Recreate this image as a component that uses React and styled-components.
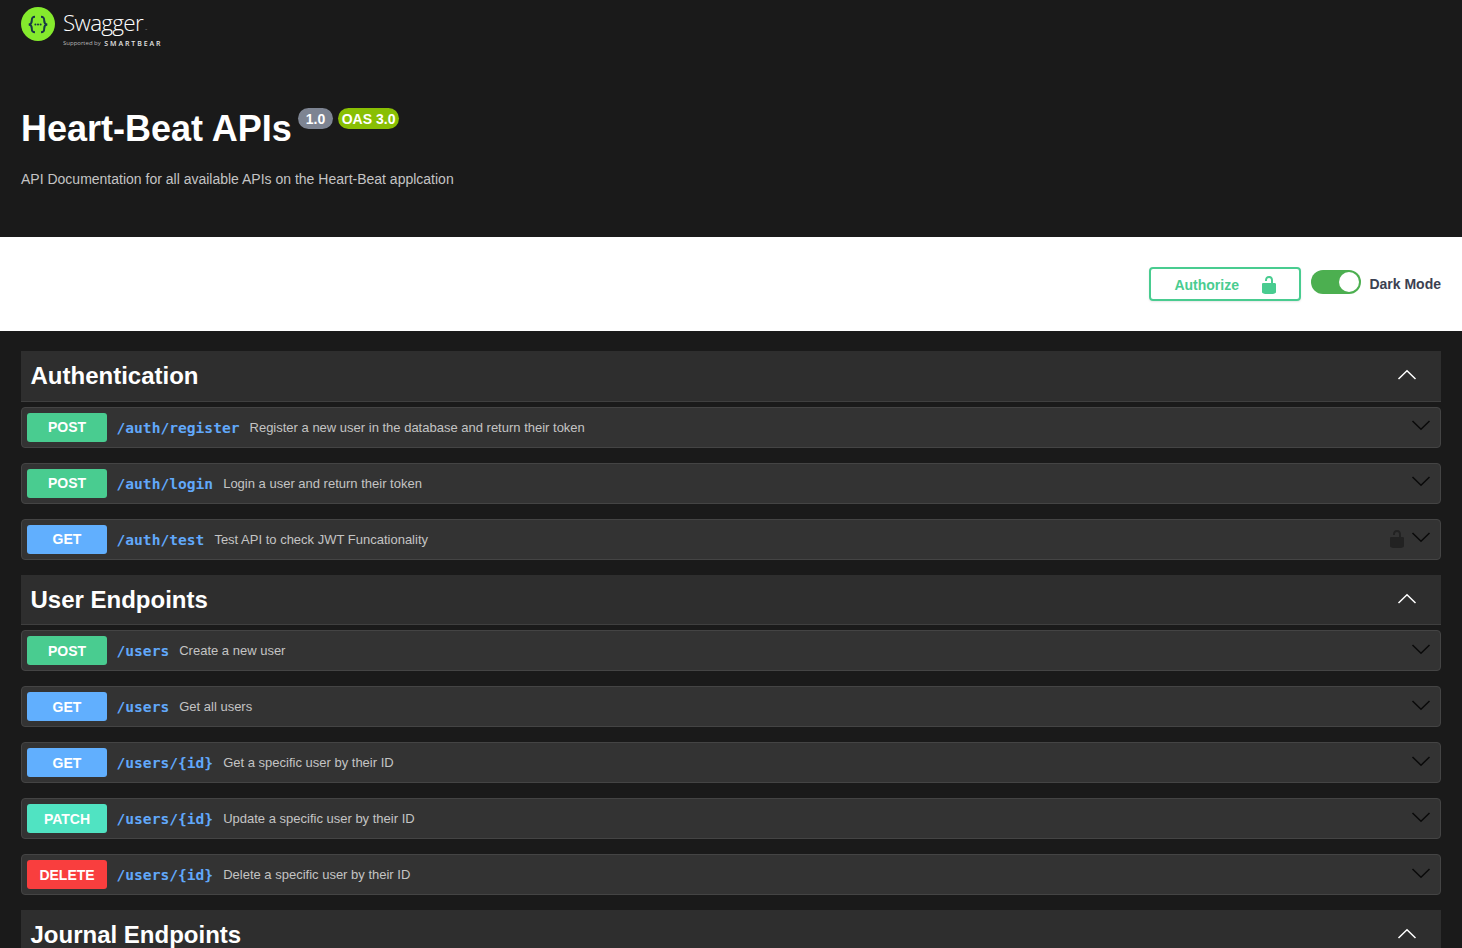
import styled, { createGlobalStyle } from 'styled-components'

const Global = createGlobalStyle`
html, body {
  margin: 0;
  padding: 0;
  height: 948px;
  overflow: hidden;
  background-color: #1a1a1a;
  font-family: "Liberation Sans", Arial, sans-serif;
}
#root {
  height: 948px;
  overflow: hidden;
}
`

const Header = styled.header`
height: 237px;
box-sizing: border-box;
padding: 7px 21px 0;
background-color: #1a1a1a;
`

const Logo = styled.div`
display: flex;
align-items: flex-start;
gap: 8px;
height: 40px;
`

const LogoText = styled.div`
display: flex;
flex-direction: column;
`

const LogoName = styled.span`
font-family: "Open Sans", sans-serif;
font-weight: 300;
font-size: 22.5px;
line-height: 32px;
letter-spacing: -0.7px;
color: #ffffff;
`

const LogoTm = styled.span`
margin-left: 2px;
font-size: 3px;
line-height: 3px;
letter-spacing: 0;
color: #cccccc;
`

const LogoSub = styled.div`
display: flex;
align-items: center;
gap: 3.5px;
height: 8px;
white-space: nowrap;
`

const Supported = styled.span`
font-family: "Open Sans", sans-serif;
font-size: 6px;
color: #b8b8b8;
`

const Smartbear = styled.span`
font-family: "Open Sans", sans-serif;
font-size: 7px;
font-weight: 600;
letter-spacing: 1.9px;
color: #e4e4e4;
`

const TitleRow = styled.div`
display: flex;
align-items: flex-start;
margin-top: 61px;
`

const Title = styled.h1`
margin: 0;
font-size: 36px;
font-weight: 700;
line-height: 42px;
color: #ffffff;
`

const Stamp = styled.span`
margin: 0 0 0 ${p => p.$gap}px;
padding: 1px ${p => p.$pad}px 0;
height: 21px;
box-sizing: border-box;
border-radius: 11px;
background-color: ${p => p.$bg};
font-size: 14px;
font-weight: 700;
line-height: 20px;
color: #ffffff;
`

const Description = styled.p`
margin: 19px 0 0;
font-size: 14px;
line-height: 20px;
color: #c4c4c4;
`

const Bar = styled.div`
height: 94px;
box-sizing: border-box;
padding: 30px 21px 0;
display: flex;
justify-content: flex-end;
align-items: flex-start;
background-color: #ffffff;
`

const Authorize = styled.button`
width: 152px;
height: 34px;
box-sizing: border-box;
padding: 1px 20px 0 23px;
display: flex;
align-items: center;
justify-content: space-between;
background: transparent;
border: 2px solid #49cc90;
border-radius: 4px;
box-shadow: 0 1px 2px rgba(0, 0, 0, 0.1);
font-family: inherit;
font-size: 14px;
font-weight: 700;
color: #49cc90;
`

const Toggle = styled.div`
width: 50px;
height: 24px;
margin: 3px 0 0 10px;
padding: 2px;
box-sizing: border-box;
display: flex;
justify-content: flex-end;
border-radius: 12px;
background-color: #4caf50;
`

const Knob = styled.span`
width: 20px;
height: 20px;
border-radius: 50%;
background-color: #ffffff;
`

const ModeLabel = styled.span`
margin: 9px 0 0 8px;
font-size: 14px;
font-weight: 700;
line-height: 16px;
color: #3b4151;
`

const Main = styled.main`
padding: 20px 21px 0;
`

const SectionHead = styled.div`
height: 50.6px;
box-sizing: border-box;
padding: 1px 24px 0 9.5px;
display: flex;
align-items: center;
justify-content: space-between;
background-color: #2e2e2e;
border-bottom: 1px solid #3f3f3f;
`

const SectionTitle = styled.h3`
margin: 0;
font-size: 24px;
font-weight: 700;
line-height: 30px;
color: #ffffff;
`

const Rows = styled.div`
padding-top: 5px;
`

const Row = styled.div`
height: 41px;
margin-bottom: 15px;
box-sizing: border-box;
padding: 5px 9px 5px 5px;
display: flex;
align-items: center;
background-color: #333333;
border: 1px solid #444444;
border-radius: 4px;
`

const Method = styled.span`
flex: none;
width: 80px;
height: 29px;
display: flex;
align-items: center;
justify-content: center;
box-sizing: border-box;
padding-top: 0.4px;
border-radius: 3px;
background-color: ${p => p.$bg};
font-size: 14px;
font-weight: 700;
color: #ffffff;
`

const Path = styled.span`
padding: 0 10px 0 9.5px;
font-family: "DejaVu Sans Mono", monospace;
font-size: 14.6px;
font-weight: 700;
color: #61a8fa;
`

const Summary = styled.span`
flex: 1;
font-size: 13px;
color: #c4c4c4;
`

const Chevron = styled.svg`
flex: none;
width: 20px;
height: 20px;
fill: none;
stroke: ${p => p.$color};
stroke-width: 1.5px;
`

const Lock = styled.svg`
flex: none;
width: 20px;
height: 20px;
fill: ${p => p.$color};
margin-right: ${p => p.$right}px;
`

const LOCK_PATH = 'M15.8 8H14V5.6C14 2.703 12.665 1 10 1 7.334 1 6 2.703 6 5.6V6h2v-.801C8 3.754 8.797 3 10 3c1.203 0 2 .754 2 2.199V8H4c-.553 0-1 .646-1 1.199V17c0 .549.428 1.139.951 1.307l1.197.387C5.672 18.861 6.55 19 7.1 19h5.8c.549 0 1.428-.139 1.951-.307l1.196-.387c.524-.167.953-.757.953-1.306V9.199C17 8.646 16.352 8 15.8 8z'

const COLORS = { POST: '#49cc90', GET: '#61affe', PATCH: '#50e3c2', DELETE: '#f93e3e' }

const sections = [
  {
    name: 'Authentication',
    rows: [
      { method: 'POST', path: '/auth/register', text: 'Register a new user in the database and return their token' },
      { method: 'POST', path: '/auth/login', text: 'Login a user and return their token' },
      { method: 'GET', path: '/auth/test', text: 'Test API to check JWT Funcationality', locked: true },
    ],
  },
  {
    name: 'User Endpoints',
    rows: [
      { method: 'POST', path: '/users', text: 'Create a new user' },
      { method: 'GET', path: '/users', text: 'Get all users' },
      { method: 'GET', path: '/users/{id}', text: 'Get a specific user by their ID' },
      { method: 'PATCH', path: '/users/{id}', text: 'Update a specific user by their ID' },
      { method: 'DELETE', path: '/users/{id}', text: 'Delete a specific user by their ID' },
    ],
  },
  { name: 'Journal Endpoints', rows: [] },
]

function SwaggerMark() {
  return (
    <svg width="34" height="34" viewBox="0 0 34 34">
      <circle cx="17" cy="17" r="17" fill="#85ea2d" />
      <g fill="none" stroke="#173647" strokeWidth="2">
        <path d="M14 9.8C10.8 9.8 10.8 11.4 10.8 13.6C10.8 15.8 10.4 17.2 7.8 17.5C10.4 17.8 10.8 19.2 10.8 21.4C10.8 23.6 10.8 25.2 14 25.2" />
        <path d="M20 9.8C23.2 9.8 23.2 11.4 23.2 13.6C23.2 15.8 23.6 17.2 26.2 17.5C23.6 17.8 23.2 19.2 23.2 21.4C23.2 23.6 23.2 25.2 20 25.2" />
      </g>
      <g fill="#173647">
        <circle cx="14.4" cy="17.5" r="1" />
        <circle cx="17" cy="17.5" r="1" />
        <circle cx="19.6" cy="17.5" r="1" />
      </g>
    </svg>
  )
}

function Endpoint({ row }) {
  return (
    <Row>
      <Method $bg={COLORS[row.method]}>{row.method}</Method>
      <Path>{row.path}</Path>
      <Summary>{row.text}</Summary>
      {row.locked && (
        <Lock viewBox="0 0 20 20" $color="#222222" $right={4}>
          <path d={LOCK_PATH} />
        </Lock>
      )}
      <Chevron viewBox="0 0 20 20" $color="#0a0a0a">
        <polyline points="1.5,4 10,12.2 18.5,4" />
      </Chevron>
    </Row>
  )
}

export default function App() {
  return (
    <>
      <Global />
      <Header>
        <Logo>
          <SwaggerMark />
          <LogoText>
            <LogoName>Swagger<LogoTm>™</LogoTm></LogoName>
            <LogoSub>
              <Supported>Supported by</Supported>
              <Smartbear>SMARTBEAR</Smartbear>
            </LogoSub>
          </LogoText>
        </Logo>
        <TitleRow>
          <Title>Heart-Beat APIs</Title>
          <Stamp $bg="#7d8492" $gap={6} $pad={8}>1.0</Stamp>
          <Stamp $bg="#89bf04" $gap={4.5} $pad={4}>OAS 3.0</Stamp>
        </TitleRow>
        <Description>API Documentation for all available APIs on the Heart-Beat applcation</Description>
      </Header>
      <Bar>
        <Authorize>
          Authorize
          <Lock viewBox="0 0 20 20" $color="#49cc90" $right={0}>
            <path d={LOCK_PATH} />
          </Lock>
        </Authorize>
        <Toggle>
          <Knob />
        </Toggle>
        <ModeLabel>Dark Mode</ModeLabel>
      </Bar>
      <Main>
        {sections.map(section => (
          <section key={section.name}>
            <SectionHead>
              <SectionTitle>{section.name}</SectionTitle>
              <Chevron viewBox="0 0 20 20" $color="#ffffff">
                <polyline points="1.5,13 10,4.8 18.5,13" />
              </Chevron>
            </SectionHead>
            <Rows>
              {section.rows.map((row, i) => (
                <Endpoint key={i} row={row} />
              ))}
            </Rows>
          </section>
        ))}
      </Main>
    </>
  )
}
